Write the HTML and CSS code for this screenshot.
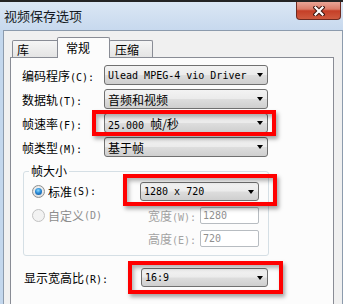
FILE: index.html
```html
<!DOCTYPE html>
<html lang="zh-CN">
<head>
<meta charset="utf-8">
<title>视频保存选项</title>
<link rel="stylesheet" href="styles.css">
</head>
<body>
<div class="win">
  <div class="titlebar">
    <div class="title">视频保存选项</div>
    <div class="close">
      <svg width="12" height="10" viewBox="0 0 12 10"><path d="M2.5 1.5 L9.5 8.5 M9.5 1.5 L2.5 8.5" stroke="#3c1610" stroke-width="4.2" stroke-linecap="square" fill="none"/><path d="M2.5 1.5 L9.5 8.5 M9.5 1.5 L2.5 8.5" stroke="#fff" stroke-width="2.2" stroke-linecap="square" fill="none"/></svg>
    </div>
  </div>
  <div class="client">
    <div class="tabs">
      <div class="tab t1">库</div>
      <div class="tab sel">常规</div>
      <div class="tab t3">压缩</div>
    </div>
    <div class="panel">
      <div class="form">
        <div class="lbl">编码程序<span class="m">(C):</span></div>
        <div class="combo"><span class="m">Ulead MPEG-4 vio Driver</span></div>
        <div class="lbl">数据轨<span class="m">(T):</span></div>
        <div class="combo">音频和视频</div>
        <div class="lbl">帧速率<span class="m">(F):</span></div>
        <div class="combo"><span><span class="m">25.000 </span>帧/秒</span></div>
        <div class="lbl">帧类型<span class="m">(M):</span></div>
        <div class="combo">基于帧</div>
      </div>
      <fieldset class="group">
        <legend>帧大小</legend>
        <div class="ggrid">
          <div class="opt r1"><span class="radio on"></span>标准<span class="m">(S):</span></div>
          <div class="combo c5"><span class="m">1280 x 720</span></div>
          <div class="opt r2 dis"><span class="radio"></span>自定义<span class="m">(D)</span></div>
          <div class="sub">宽度<span class="m">(W):</span></div>
          <div class="input"><span class="m">1280</span></div>
          <div class="sub r3">高度<span class="m">(E):</span></div>
          <div class="input"><span class="m">720</span></div>
        </div>
      </fieldset>
      <div class="aspect">
        <div class="lbl">显示宽高比<span class="m">(R):</span></div>
        <div class="combo"><span class="m">16:9</span></div>
      </div>
    </div>
  </div>
  <div class="mark mk1"></div>
  <div class="mark mk2"></div>
  <div class="mark mk3"></div>
</div>
</body>
</html>
```

FILE: styles.css
```css
* { box-sizing: border-box; }
html, body { margin: 0; padding: 0; }
body {
  width: 343px;
  height: 304px;
  overflow: hidden;
  background: #c9dcf0;
  font-family: "Noto Sans CJK SC", sans-serif;
  font-size: 12px;
  color: #000;
}
.m {
  font-family: "DejaVu Sans Mono", monospace;
  font-size: 10px;
  white-space: pre;
}
.win {
  position: relative;
  width: 343px;
  height: 304px;
  overflow: hidden;
  border-top: 2px solid #242424;
  background: linear-gradient(90deg, #c3d7ed, #cddff2);
}
.titlebar {
  height: 28px;
  display: flex;
  align-items: flex-start;
  padding-left: 4px;
  background: linear-gradient(#dbe7f4, #c7d9ee);
}
.title {
  margin-top: 5px;
  line-height: 18px;
  font-size: 13px;
  color: #141a22;
}
.close {
  margin-left: auto;
  margin-right: 2px;
  width: 45px;
  height: 18px;
  border: 1px solid #6e2a20;
  border-top: none;
  border-radius: 0 0 4px 4px;
  background: linear-gradient(#e9a596 0%, #dc7d69 42%, #c53f27 52%, #cf5a3f 100%);
  display: flex;
  align-items: center;
  justify-content: center;
}
.client {
  margin-left: 3px;
  height: 274px;
  border: 1px solid #8c9bad;
  border-bottom: none;
  background: #f0f0f0;
  padding: 6px 7px 0 6px;
}
.tabs {
  display: flex;
  align-items: flex-end;
  height: 20px;
  padding-left: 2px;
}
.tab {
  height: 17px;
  border: 1px solid #898c95;
  border-bottom: none;
  border-radius: 2px 2px 0 0;
  background: linear-gradient(#f5f5f5, #e4e4e4);
  padding-top: 1px;
  line-height: 15px;
}
.t1 { width: 47px; padding-left: 4px; }
.sel {
  position: relative;
  z-index: 1;
  width: 53px;
  height: 21px;
  margin: 0 -1px -1px -2px;
  padding-left: 8px;
  padding-top: 2px;
  background: #fcfcfc;
}
.t3 { width: 44px; padding-left: 5px; }
.panel {
  width: 324px;
  height: 260px;
  border: 1px solid #898c95;
  background: #fcfcfc;
  padding: 7px 0 0 11px;
}
.form {
  display: grid;
  grid-template-columns: 82px 164px;
  grid-auto-rows: 20px;
  row-gap: 4px;
  align-items: center;
}
.lbl { white-space: nowrap; }
.combo {
  height: 20px;
  display: flex;
  align-items: center;
  padding-left: 3px;
  border: 1px solid #707070;
  border-radius: 3px;
  background: linear-gradient(#f3f3f3 0%, #ebebeb 48%, #dddddd 52%, #cfcfcf 100%);
  white-space: nowrap;
}
.combo::after {
  content: "";
  margin-left: auto;
  margin-right: 4px;
  border-top: 4px solid #000;
  border-left: 3.5px solid transparent;
  border-right: 3.5px solid transparent;
}
.group {
  width: 246px;
  margin: 7px 0 0 1px;
  padding: 4px 8px 8px 8px;
  border: 1px solid #d5dfe5;
  border-radius: 3px;
}
.group legend {
  margin-left: -3px;
  padding: 0 2px;
  line-height: 14px;
}
.ggrid {
  display: grid;
  grid-template-columns: 108px 8px 52px 59px;
  grid-template-rows: 19px 18px 18px;
  row-gap: 5px;
  align-items: center;
}
.opt {
  display: flex;
  align-items: center;
  white-space: nowrap;
}
.r1 { grid-column: 1; }
.c5 { grid-column: 2 / 5; height: 19px; }
.r2 { grid-column: 1 / 3; }
.r3 { grid-column: 3; }
.sub {
  grid-column: 3;
  color: #a3a3a3;
  white-space: nowrap;
}
.dis { color: #8d8d8d; }
.radio {
  width: 13px;
  height: 13px;
  margin-right: 3px;
  border-radius: 50%;
  border: 1px solid #8e8f8f;
  background: radial-gradient(circle at 50% 40%, #ffffff, #e0e0e0 70%, #cdcdcd);
  display: flex;
  align-items: center;
  justify-content: center;
}
.radio.on::after {
  content: "";
  width: 7px;
  height: 7px;
  border-radius: 50%;
  background: radial-gradient(circle at 45% 35%, #8fdcff, #2a8ad6 45%, #0c4b8f 100%);
}
.dis .radio {
  border-color: #c2c2c2;
  background: #f2f2f2;
}
.input {
  grid-column: 4;
  height: 17px;
  border: 1px solid #b7bcc1;
  border-radius: 2px;
  background: #ffffff;
  color: #8f8f8f;
  padding-left: 2px;
  display: flex;
  align-items: center;
}
.aspect {
  display: grid;
  grid-template-columns: 119px 127px;
  grid-auto-rows: 19px;
  align-items: center;
  margin-top: 12px;
}
.aspect .lbl { padding-left: 2px; }
.aspect .combo { height: 19px; }
.mark {
  position: absolute;
  border: 4px solid #ff0000;
  box-shadow: 2px 3px 4px rgba(0, 0, 0, 0.35), inset 2px 3px 4px rgba(0, 0, 0, 0.3);
}
.mk1 { left: 92px; top: 108px; width: 184px; height: 26px; }
.mk2 { left: 123px; top: 172px; width: 154px; height: 32px; }
.mk3 { left: 128px; top: 259px; width: 155px; height: 33px; }
```
